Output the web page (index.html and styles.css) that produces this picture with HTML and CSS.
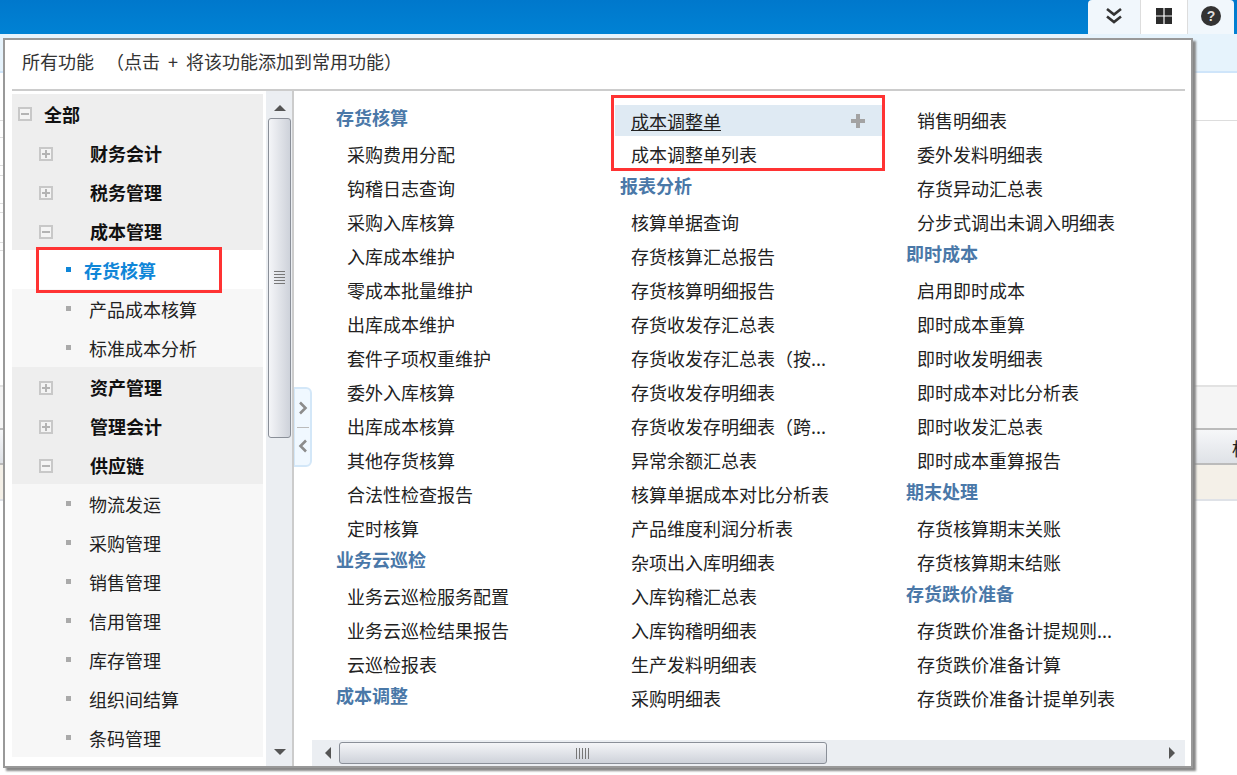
FILE: index.html
```html
<!DOCTYPE html>
<html lang="zh-CN">
<head>
<meta charset="utf-8">
<title>所有功能</title>
<link rel="stylesheet" href="styles.css">
</head>
<body>
<div class="page">
  <header class="topbar">
    <div class="tabs">
      <div class="tab tab-a"><svg width="20" height="18" viewBox="0 0 20 18"><path d="M3 2l7 5.500L17 2M3 9.500l7 5.500 7-5.500" fill="none" stroke="#333" stroke-width="2.600"/></svg></div>
      <div class="tab tab-on"><svg width="18" height="18" viewBox="0 0 18 18"><path d="M1 1h7.400v7.400H1zM9.600 1H17v7.400H9.600zM1 9.600h7.400V17H1zM9.600 9.600H17V17H9.600z" fill="#2b2b2b"/></svg></div>
      <div class="tab"><span class="help">?</span></div>
    </div>
  </header>
  <div class="subbar"></div>
  <div class="spacer"></div>
  <div class="toolbar"></div>
  <div class="thead"><span>标</span></div>
  <div class="trow"></div>
</div>

<section class="modal">
  <div class="modal-title">所有功能<span>（点击 + 将该功能添加到常用功能）</span></div>
  <div class="modal-rule"></div>
  <div class="modal-body">
    <nav class="tree">
      <div class="node root"><i class="tog minus"></i><b>全部</b></div>
      <div class="node group"><i class="tog plus"></i><b>财务会计</b></div>
      <div class="node group"><i class="tog plus"></i><b>税务管理</b></div>
      <div class="node group"><i class="tog minus"></i><b>成本管理</b></div>
      <div class="node leaf sel"><i class="dot"></i>存货核算</div>
      <div class="node leaf"><i class="dot"></i>产品成本核算</div>
      <div class="node leaf"><i class="dot"></i>标准成本分析</div>
      <div class="node group"><i class="tog plus"></i><b>资产管理</b></div>
      <div class="node group"><i class="tog plus"></i><b>管理会计</b></div>
      <div class="node group"><i class="tog minus"></i><b>供应链</b></div>
      <div class="node leaf"><i class="dot"></i>物流发运</div>
      <div class="node leaf"><i class="dot"></i>采购管理</div>
      <div class="node leaf"><i class="dot"></i>销售管理</div>
      <div class="node leaf"><i class="dot"></i>信用管理</div>
      <div class="node leaf"><i class="dot"></i>库存管理</div>
      <div class="node leaf"><i class="dot"></i>组织间结算</div>
      <div class="node leaf"><i class="dot"></i>条码管理</div>
    </nav>
    <div class="vscroll">
      <i class="arrow up"></i>
      <div class="vthumb"><span class="grip-v"></span></div>
      <i class="arrow down"></i>
    </div>
    <div class="pane">
      <div class="cols">
        <div class="col">
          <h3>存货核算</h3>
          <p>采购费用分配</p><p>钩稽日志查询</p><p>采购入库核算</p><p>入库成本维护</p><p>零成本批量维护</p><p>出库成本维护</p><p>套件子项权重维护</p><p>委外入库核算</p><p>出库成本核算</p><p>其他存货核算</p><p>合法性检查报告</p><p>定时核算</p>
          <h3>业务云巡检</h3>
          <p>业务云巡检服务配置</p><p>业务云巡检结果报告</p><p>云巡检报表</p>
          <h3>成本调整</h3>
        </div>
        <div class="col">
          <p class="hot"><u>成本调整单</u><svg width="14" height="14" viewBox="0 0 14 14"><path d="M5 0h4v5h5v4H9v5H5V9H0V5h5z" fill="#a3a3a3"/></svg></p>
          <p>成本调整单列表</p>
          <h3>报表分析</h3>
          <p>核算单据查询</p><p>存货核算汇总报告</p><p>存货核算明细报告</p><p>存货收发存汇总表</p><p>存货收发存汇总表（按...</p><p>存货收发存明细表</p><p>存货收发存明细表（跨...</p><p>异常余额汇总表</p><p>核算单据成本对比分析表</p><p>产品维度利润分析表</p><p>杂项出入库明细表</p><p>入库钩稽汇总表</p><p>入库钩稽明细表</p><p>生产发料明细表</p><p>采购明细表</p>
        </div>
        <div class="col">
          <p>销售明细表</p><p>委外发料明细表</p><p>存货异动汇总表</p><p>分步式调出未调入明细表</p>
          <h3>即时成本</h3>
          <p>启用即时成本</p><p>即时成本重算</p><p>即时收发明细表</p><p>即时成本对比分析表</p><p>即时收发汇总表</p><p>即时成本重算报告</p>
          <h3>期末处理</h3>
          <p>存货核算期末关账</p><p>存货核算期末结账</p>
          <h3>存货跌价准备</h3>
          <p>存货跌价准备计提规则...</p><p>存货跌价准备计算</p><p>存货跌价准备计提单列表</p>
        </div>
      </div>
      <div class="hscroll">
        <i class="arrow left"></i>
        <div class="hthumb"><span class="grip-h"></span></div>
        <i class="arrow right"></i>
      </div>
    </div>
  </div>
  <div class="handle">
    <svg width="10" height="14" viewBox="0 0 10 14"><path d="M2 1.500L7.500 7 2 12.500" fill="none" stroke="#8c8c8c" stroke-width="2.600"/></svg>
    <span class="handle-sep"></span>
    <svg width="10" height="14" viewBox="0 0 10 14"><path d="M8 1.500L2.500 7 8 12.500" fill="none" stroke="#8c8c8c" stroke-width="2.600"/></svg>
  </div>
  <div class="mark mark-tree"></div>
  <div class="mark mark-cost"></div>
</section>
</body>
</html>
```

FILE: styles.css
```css
* { box-sizing: border-box; }
html, body { margin: 0; height: 100%; }
body {
  overflow: hidden;
  background: #fff;
  font-family: "Noto Sans CJK SC", "Microsoft YaHei", sans-serif;
  font-size: 18px;
  color: #222;
}
.page { display: flex; flex-direction: column; height: 775px; }
.topbar {
  height: 34px;
  flex: none;
  display: flex;
  justify-content: flex-end;
  padding-right: 3px;
  background: linear-gradient(#0078cc, #0082d4);
}
.tabs {
  width: 146px;
  display: flex;
  background: #f1f7fc;
  border-radius: 4px 4px 0 0;
}
.tab { flex: 1; display: flex; align-items: center; justify-content: center; padding-bottom: 3px; }
.tab-a { flex: 0 0 52px; }
.tab-on { background: #fff; border-left: 1px solid #ddd; border-right: 1px solid #ddd; flex: 0 0 48px; }
.help {
  width: 20px;
  height: 20px;
  border-radius: 50%;
  background: #333;
  color: #ddd;
  font: bold 14px/20px "Liberation Sans", sans-serif;
  text-align: center;
}
.subbar { height: 39px; flex: none; background: #e6f3fc; border-bottom: 2px solid #cfe5fa; }
.spacer {
  height: 312px;
  flex: none;
  background:
    linear-gradient(#ddd, #ddd) 0 47px / 100% 1px no-repeat,
    linear-gradient(#ddd, #ddd) 0 64px / 3px 1px no-repeat,
    linear-gradient(#ddd, #ddd) 0 92px / 3px 1px no-repeat,
    linear-gradient(#ddd, #ddd) 0 102px / 3px 1px no-repeat,
    linear-gradient(#ddd, #ddd) 0 130px / 3px 1px no-repeat,
    linear-gradient(#ddd, #ddd) 0 139px / 3px 1px no-repeat,
    linear-gradient(#ddd, #ddd) 0 169px / 3px 1px no-repeat,
    linear-gradient(#ddd, #ddd) 0 177px / 3px 1px no-repeat;
}
.toolbar { height: 45px; flex: none; background: #f5f5f5; border-top: 2px solid #e2e2e2; border-bottom: 2px solid #bbb; }
.thead {
  height: 35px;
  flex: none;
  background: linear-gradient(#f6f7f9, #dfe2e7);
  border-bottom: 2px solid #bbb;
  display: flex;
  justify-content: flex-end;
  line-height: 36px;
  overflow: hidden;
}
.thead span { margin-right: -13px; }
.trow { height: 36px; flex: none; background: #f4f0e8; border-bottom: 2px solid #dfe2e7; }

.modal {
  position: absolute;
  left: 3px;
  top: 38px;
  width: 1190px;
  height: 730px;
  background: #fff;
  border: 2px solid #999;
  box-shadow: 3px 3px 2px #888;
  display: flex;
  flex-direction: column;
}
.modal-title { height: 49px; flex: none; padding-left: 17px; line-height: 43px; font-size: 18px; word-spacing: 4px; color: #333; }
.modal-title span { margin-left: 12px; }
.modal-rule { height: 2px; flex: none; margin: 0 6px 0 7px; background: #ccc; }
.modal-body { flex: 1; min-height: 0; display: flex; padding: 0 6px 0 7px; }

.tree { width: 251px; flex: none; margin-top: 3px; align-self: flex-start; }
.node { height: 39px; line-height: 41px; position: relative; color: #222; }
.node b { color: #111; font-weight: 700; }
.root { padding-left: 32px; background: #eee; }
.group { padding-left: 78px; background: #eee; }
.leaf { padding-left: 77px; background: #f7f7f7; }
.sel { background: #fff; padding-left: 72px; color: #0f86d8; font-weight: 700; }
.dot { position: absolute; left: 54px; top: 17px; width: 5px; height: 5px; background: #aaa; }
.sel .dot { background: #0f86d8; }
.tog { position: absolute; left: 27px; top: 14px; width: 14px; height: 14px; border: 2px solid #c8c8c8; background: #f4f4f4; }
.root .tog { left: 6px; top: 13px; }
.tog::before { content: ""; position: absolute; left: 1px; top: 4px; width: 8px; height: 2px; background: #b4b4b4; }
.plus::after { content: ""; position: absolute; left: 4px; top: 1px; width: 2px; height: 8px; background: #b4b4b4; }

.vscroll {
  width: 28px;
  flex: none;
  margin-left: 3px;
  background: #ebeef2;
  border-right: 2px solid #ccc;
  display: flex;
  flex-direction: column;
  align-items: center;
  padding: 14px 0 11px 1px;
}
.vthumb {
  width: 23px;
  height: 320px;
  margin-top: 7px;
  border: 1px solid #8a8f98;
  border-radius: 3px;
  background: linear-gradient(90deg, #f4f5f8, #ced2da);
  display: flex;
  align-items: center;
  justify-content: center;
}
.grip-v { width: 11px; height: 14px; background: repeating-linear-gradient(#777 0 1px, transparent 1px 3px); }
.arrow { display: block; width: 0; height: 0; border-style: solid; border-color: transparent; }
.up { border-width: 0 6px 6px; border-bottom-color: #555; }
.down { margin-top: auto; border-width: 6px 6px 0; border-top-color: #555; }
.left { border-width: 6px 6px 6px 0; border-right-color: #555; }
.right { margin-left: auto; border-width: 6px 0 6px 6px; border-left-color: #555; }

.pane { flex: 1; min-width: 0; display: flex; flex-direction: column; }
.cols {
  flex: 1;
  min-height: 0;
  padding: 13px 0 0 42px;
  display: grid;
  grid-template-columns: 284px 286px 1fr;
}
.col h3 { margin: 0; height: 34px; line-height: 26px; font-size: 18px; font-weight: 700; color: #4a78a8; }
.col p {
  margin: 0;
  height: 34px;
  line-height: 32px;
  padding-left: 11px;
  white-space: nowrap;
  color: #222;
}
.col .hot {
  width: 268px;
  margin-left: -5px;
  padding: 0 18px 0 16px;
  display: flex;
  align-items: center;
  justify-content: space-between;
  background: linear-gradient(#dfeaf3, #dfeaf3) 0 1px / 100% 31px no-repeat;
}
.hot u { text-underline-offset: 1px; }
.hot svg { margin-bottom: 1px; }
.hscroll {
  height: 26px;
  flex: none;
  margin-left: 18px;
  background: #ebeef2;
  display: flex;
  align-items: center;
  padding: 0 10px 0 13px;
}
.hthumb {
  width: 488px;
  height: 22px;
  margin-left: 8px;
  border: 1px solid #8a8f98;
  border-radius: 3px;
  background: linear-gradient(#f4f5f8, #ced2da);
  display: flex;
  align-items: center;
  justify-content: center;
}
.grip-h { width: 14px; height: 11px; background: repeating-linear-gradient(90deg, #777 0 1px, transparent 1px 3px); }

.handle {
  position: absolute;
  left: 289px;
  top: 347px;
  width: 18px;
  height: 80px;
  background: #f0f8ff;
  border: 2px solid #d3e7f8;
  border-left-width: 1px;
  border-radius: 0 6px 6px 0;
  display: flex;
  flex-direction: column;
  align-items: center;
  justify-content: space-evenly;
}
.handle-sep { width: 12px; height: 1px; background: #bbb; }
.mark { position: absolute; border: 3px solid #f33; }
.mark-tree { left: 31px; top: 207px; width: 186px; height: 46px; }
.mark-cost { left: 606px; top: 55px; width: 274px; height: 76px; }
```
